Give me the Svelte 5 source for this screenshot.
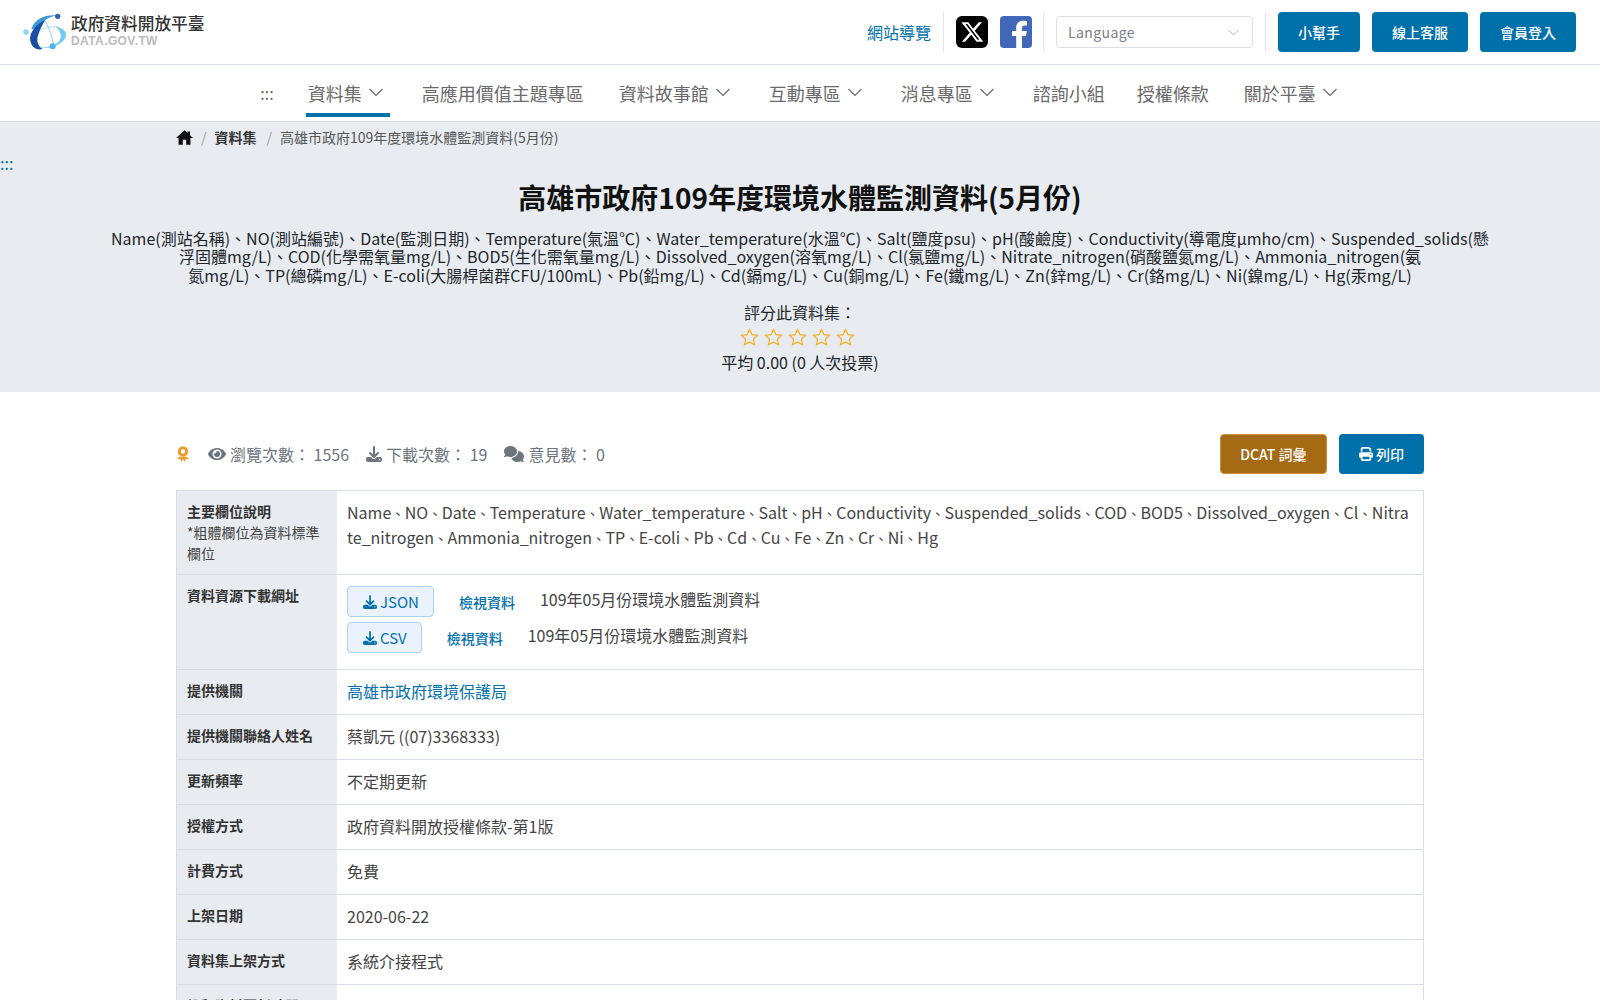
<script lang="ts">
  const navItems = [
    { label: "資料集", caret: true, active: true },
    { label: "高應用價值主題專區", wide: true },
    { label: "資料故事館", caret: true },
    { label: "互動專區", caret: true },
    { label: "消息專區", caret: true },
    { label: "諮詢小組" },
    { label: "授權條款", wide: true },
    { label: "關於平臺", caret: true }
  ];

  const fields = [
    "Name", "NO", "Date", "Temperature", "Water_temperature", "Salt", "pH", "Conductivity",
    "Suspended_solids", "COD", "BOD5", "Dissolved_oxygen", "Cl", "Nitrate_nitrogen",
    "Ammonia_nitrogen", "TP", "E-coli", "Pb", "Cd", "Cu", "Fe", "Zn", "Cr", "Ni", "Hg"
  ];

  const description =
    "Name(測站名稱)、NO(測站編號)、Date(監測日期)、Temperature(氣溫℃)、Water_temperature(水溫℃)、Salt(鹽度psu)、pH(酸鹼度)、Conductivity(導電度µmho/cm)、Suspended_solids(懸浮固體mg/L)、COD(化學需氧量mg/L)、BOD5(生化需氧量mg/L)、Dissolved_oxygen(溶氧mg/L)、Cl(氯鹽mg/L)、Nitrate_nitrogen(硝酸鹽氮mg/L)、Ammonia_nitrogen(氨\n氮mg/L)、TP(總磷mg/L)、E-coli(大腸桿菌群CFU/100mL)、Pb(鉛mg/L)、Cd(鎘mg/L)、Cu(銅mg/L)、Fe(鐵mg/L)、Zn(鋅mg/L)、Cr(鉻mg/L)、Ni(鎳mg/L)、Hg(汞mg/L)";

  const resources = [
    { format: "JSON", name: "109年05月份環境水體監測資料" },
    { format: "CSV", name: "109年05月份環境水體監測資料" }
  ];

  const plainRows = [
    { label: "提供機關聯絡人姓名", value: "蔡凱元 ((07)3368333)" },
    { label: "更新頻率", value: "不定期更新" },
    { label: "授權方式", value: "政府資料開放授權條款-第1版" },
    { label: "計費方式", value: "免費" },
    { label: "上架日期", value: "2020-06-22" },
    { label: "資料集上架方式", value: "系統介接程式" },
    { label: "詮釋資料更新時間", value: "2024-01-15" }
  ];
</script>

{#snippet downloadIcon()}
  <svg class="ico" viewBox="0 0 512 512" fill="currentColor"><path d="M288 32c0-17.700-14.300-32-32-32s-32 14.300-32 32V274.700l-73.400-73.400c-12.500-12.500-32.800-12.500-45.300 0s-12.500 32.800 0 45.300l128 128c12.500 12.500 32.800 12.500 45.300 0l128-128c12.500-12.500 12.500-32.800 0-45.300s-32.800-12.500-45.300 0L288 274.700V32zM64 352c-35.300 0-64 28.700-64 64v32c0 35.300 28.700 64 64 64H448c35.300 0 64-28.700 64-64V416c0-35.300-28.700-64-64-64H346.500l-45.300 45.300c-25 25-65.500 25-90.500 0L165.500 352H64zm368 56a24 24 0 1 1 0 48 24 24 0 1 1 0-48z"/></svg>
{/snippet}

<header class="topbar">
  <a class="logo" href="#top">
    <svg class="logo-mark" viewBox="0 0 150 144">
      <path d="M28 80C60 62 90 56 110 56" fill="none" stroke="#a8def3" stroke-width="3"/>
      <path d="M76 38c11 22 20 46 24 70" fill="none" stroke="#8fd4f0" stroke-width="3"/>
      <path d="M58 118c42 0 68-16 64-38-2-10-8-18-16-25 20 4 34 15 32 28-4 24-44 42-80 35z" fill="#74cdee"/>
      <path d="M34 64C40 38 70 18 110 22 84 28 60 44 48 64z" fill="#3a9ad9"/>
      <path d="M76 36C48 48 24 78 32 102c4 17 20 26 36 21-16-10-20-28-12-46 4-14 12-28 20-41z" fill="#1c4fa3"/>
      <circle cx="18" cy="72" r="8" fill="#8fd4f0"/>
      <circle cx="113" cy="25" r="8" fill="#2f62b5"/>
      <circle cx="98" cy="115" r="9" fill="#4fb2e6"/>
    </svg>
    <span class="logo-text">
      <span class="logo-zh">政府資料開放平臺</span>
      <span class="logo-en">DATA.GOV.TW</span>
    </span>
  </a>

  <div class="top-tools">
    <a class="sitemap" href="#top">網站導覽</a>
    <span class="sep"></span>
    <a class="social x" href="#top" aria-label="X">
      <svg viewBox="0 0 24 24" fill="#fff"><path d="M18.200 3h3.100l-6.800 7.800L22.500 21h-6.300l-4.900-6.400L5.700 21H2.600l7.300-8.300L2.200 3h6.400l4.400 5.900zm-1.100 16.200h1.700L7.700 4.700H5.900z"/></svg>
    </a>
    <a class="social fb" href="#top" aria-label="Facebook">
      <svg viewBox="0 0 32 32" fill="#fff"><path d="M22 32V20h4l.8-5H22v-3c0-1.600.7-2.600 2.700-2.600H27V5c-.9-.1-2.500-.3-4-.3-4 0-6.800 2.500-6.800 7v3.300H12v5h4.200v12z"/></svg>
    </a>
    <span class="sep"></span>
    <div class="lang">
      <span>Language</span>
      <svg class="caret small" viewBox="0 0 16 16"><path d="M2 5l6 6 6-6"/></svg>
    </div>
    <span class="sep"></span>
    <a class="top-btn" href="#top">小幫手</a>
    <a class="top-btn" href="#top">線上客服</a>
    <a class="top-btn" href="#top">會員登入</a>
  </div>
</header>

<nav class="mainnav">
  <span class="nav-dots">:::</span>
  {#each navItems as item}
    <a class="nav-item" class:active={item.active} class:wide={item.wide} href="#top">
      {item.label}
      {#if item.caret}
        <svg class="caret" viewBox="0 0 16 16"><path d="M1.500 5l6.500 6.500L14.500 5"/></svg>
      {/if}
    </a>
  {/each}
</nav>

<section class="banner">
  <ol class="crumbs">
    <li>
      <svg class="home" viewBox="2 3 20 17" fill="#111"><path d="M10 20v-6h4v6h5v-8h3L18.500 8.800V4.500h-3v1.600L12 3 2 12h3v8z"/></svg>
    </li>
    <li class="sl">/</li>
    <li class="crumb-bold">資料集</li>
    <li class="sl">/</li>
    <li class="crumb-cur">高雄市政府109年度環境水體監測資料(5月份)</li>
  </ol>
  <a class="skip" href="#top">:::</a>
  <h1>高雄市政府109年度環境水體監測資料(5月份)</h1>
  <p class="desc">{description}</p>
  <div class="rating">
    <div>評分此資料集：</div>
    <div class="stars">
      {#each [1, 2, 3, 4, 5] as n}
        <svg viewBox="0 0 24 24" data-star={n}><path d="M12 2.800l2.800 5.900 6.400.8-4.700 4.400 1.200 6.400-5.700-3.100-5.700 3.100 1.200-6.400-4.700-4.400 6.400-.8z"/></svg>
      {/each}
    </div>
    <div>平均 0.00 (0 人次投票)</div>
  </div>
</section>

<main class="content">
  <div class="stats">
    <div class="stat-list">
      <svg class="badge" viewBox="0 0 16 20" fill="#eb9d2f"><path d="M8 1a6 6 0 1 1 0 12A6 6 0 0 1 8 1zm0 3.500a2.500 2.500 0 1 0 0 5 2.500 2.500 0 0 0 0-5z"/><path d="M1 15l4 1 1 3 2-3 2 3 1-3 4-1-3-2H4z"/></svg>
      <span class="stat">
        <svg class="ico eye" viewBox="0 0 576 512" fill="currentColor"><path d="M572 241C518 136 411 64 288 64S58 136 4 241a32 32 0 0 0 0 30c54 105 161 177 284 177s230-72 284-177a32 32 0 0 0 0-30zM288 400a144 144 0 1 1 144-144 144 144 0 0 1-144 144zm0-240a95 95 0 0 0-25 4 48 48 0 0 1-67 67 96 96 0 1 0 92-71z"/></svg>
        <span>瀏覽次數： 1556</span>
      </span>
      <span class="stat">{@render downloadIcon()}<span>下載次數： 19</span></span>
      <span class="stat">
        <svg class="ico chat" viewBox="0 0 640 512" fill="currentColor"><path d="M208 352c114.900 0 208-78.800 208-176S322.900 0 208 0S0 78.800 0 176c0 38.600 14.700 74.300 39.600 103.400c-3.500 9.400-8.700 17.700-14.200 24.700c-4.800 6.200-9.700 11-13.300 14.300c-1.800 1.600-3.300 2.900-4.300 3.700c-.5 .4-.9 .7-1.100 .8l-.2 .2C1 327.200-1.400 334.400 .8 340.900S9.100 352 16 352c21.800 0 43.800-5.600 62.100-12.500c9.200-3.500 17.800-7.400 25.300-11.400C134.100 343.300 169.800 352 208 352zM448 176c0 112.300-99.100 196.900-216.500 207C255.800 457.400 336.400 512 432 512c38.200 0 73.900-8.700 104.700-23.900c7.500 4 16 7.900 25.200 11.400c18.300 6.900 40.300 12.500 62.100 12.500c6.900 0 13.100-4.500 15.200-11.100c2.100-6.600-.2-13.800-5.800-17.900l-.2-.2c-.2-.2-.6-.4-1.100-.8c-1-.8-2.500-2-4.300-3.700c-3.600-3.300-8.500-8.100-13.300-14.300c-5.500-7-10.700-15.400-14.200-24.700c24.900-29 39.600-64.700 39.600-103.400c0-92.800-84.900-168.900-192.600-175.500c.4 5.100 .6 10.300 .6 15.500z"/></svg>
        <span>意見數： 0</span>
      </span>
    </div>
    <div class="stat-actions">
      <a class="btn dcat" href="#top">DCAT 詞彙</a>
      <a class="btn print" href="#top">
        <svg class="ico" viewBox="0 0 512 512" fill="currentColor"><path d="M128 0C92.700 0 64 28.700 64 64v96h64V64H354.700L384 93.300V160h64V93.300c0-17-6.700-33.300-18.700-45.300L400 18.700C388 6.700 371.700 0 354.700 0H128zM384 352v96H128V352H384zm64 32h32c17.700 0 32-14.300 32-32V256c0-35.300-28.700-64-64-64H64c-35.300 0-64 28.700-64 64v96c0 17.700 14.300 32 32 32H64v64c0 35.300 28.700 64 64 64H384c35.300 0 64-28.700 64-64V384zM432 248a24 24 0 1 1 0 48 24 24 0 1 1 0-48z"/></svg>
        <span>列印</span>
      </a>
    </div>
  </div>

  <div class="table">
    <div class="row">
      <div class="label">主要欄位說明<small>*粗體欄位為資料標準欄位</small></div>
      <div class="value breakall">{#each fields as f, i}{#if i > 0}<span class="comma">、</span>{/if}{f}{/each}</div>
    </div>
    <div class="row">
      <div class="label">資料資源下載網址</div>
      <div class="value resources">
        {#each resources as res}
          <div class="res">
            <a class="dl" href="#top">{@render downloadIcon()}<span>{res.format}</span></a>
            <a class="view" href="#top">檢視資料</a>
            <span class="res-name">{res.name}</span>
          </div>
        {/each}
      </div>
    </div>
    <div class="row">
      <div class="label">提供機關</div>
      <div class="value"><a class="org" href="#top">高雄市政府環境保護局</a></div>
    </div>
    {#each plainRows as row}
      <div class="row">
        <div class="label">{row.label}</div>
        <div class="value">{row.value}</div>
      </div>
    {/each}
  </div>
</main>

<style>
  :global(body) {
    margin: 0;
    background: #fff;
    color: #212529;
    font-family: "Noto Sans CJK TC", "Noto Sans", sans-serif;
    font-size: 16px;
  }
  :global(html) {
    overflow: hidden;
    height: 1000px;
  }
  a {
    text-decoration: none;
    color: inherit;
  }

  .topbar {
    height: 64px;
    display: flex;
    align-items: center;
    justify-content: space-between;
    padding: 0 24px 0 20px;
    border-bottom: 1px solid #d9dde6;
  }
  .logo {
    display: flex;
    align-items: center;
    gap: 1px;
  }
  .logo-mark {
    width: 50px;
    height: 48px;
  }
  .logo-text {
    display: flex;
    flex-direction: column;
    margin-top: -4px;
  }
  .logo-zh {
    font-size: 16.700px;
    font-weight: 500;
    line-height: 20px;
    color: #333;
  }
  .logo-en {
    font-family: "Liberation Sans", sans-serif;
    font-weight: 700;
    font-size: 12px;
    line-height: 14px;
    color: #bbb;
    letter-spacing: 0.4px;
    margin-top: 1px;
  }
  .top-tools {
    display: flex;
    align-items: center;
  }
  .sitemap {
    color: #0070ab;
    margin-right: 12px;
  }
  .sep {
    width: 1px;
    height: 40px;
    background: #e2e4ea;
  }
  .social {
    width: 32px;
    height: 32px;
    border-radius: 4px;
    display: flex;
    align-items: center;
    justify-content: center;
    margin-left: 12px;
  }
  .social.x {
    background: #000;
    border-radius: 6px;
  }
  .social.x svg {
    width: 26px;
    height: 26px;
  }
  .social.fb {
    background: #4267b8;
    margin-right: 11px;
    overflow: hidden;
  }
  .social.fb svg {
    width: 32px;
    height: 32px;
  }
  .lang {
    width: 197px;
    height: 32px;
    box-sizing: border-box;
    margin: 0 12px;
    padding: 0 12px 0 11px;
    border: 1px solid #dcdfe8;
    border-radius: 4px;
    display: flex;
    align-items: center;
    justify-content: space-between;
    font-size: 14px;
    color: #7a8087;
    letter-spacing: 0.4px;
  }
  .top-btn {
    margin-left: 12px;
    height: 40px;
    padding: 0 20px;
    display: flex;
    align-items: center;
    background: #0070ab;
    color: #fff;
    border-radius: 4px;
    font-size: 14px;
    font-weight: 500;
  }
  .caret {
    width: 16px;
    height: 16px;
    fill: none;
    stroke: #666;
    stroke-width: 1.100;
  }
  .caret.small {
    width: 13px;
    height: 13px;
    stroke: #aaa;
  }

  .mainnav {
    height: 56px;
    display: flex;
    justify-content: center;
    padding-left: 4px;
    border-bottom: 1px solid #d9dde6;
  }
  .nav-dots {
    padding: 0 18px 0 16px;
    line-height: 56px;
    color: #666;
  }
  .nav-item {
    display: flex;
    align-items: center;
    padding: 0 16px;
    font-size: 18px;
    color: #6a6a6a;
    position: relative;
  }
  .nav-item.wide {
    margin-right: 3px;
  }
  .nav-item .caret {
    margin: 0 6px 2px 6px;
  }
  .nav-item.active::after {
    content: "";
    position: absolute;
    left: 14px;
    right: 16px;
    bottom: 4px;
    height: 4px;
    background: #0070ab;
  }

  .banner {
    background: #e8ecf1;
    height: 270px;
    box-sizing: border-box;
    text-align: center;
    overflow: hidden;
  }
  .crumbs {
    list-style: none;
    margin: 0;
    padding: 0 176px;
    height: 30px;
    display: flex;
    align-items: center;
    gap: 8px;
    font-size: 14px;
    color: #555;
  }
  .home {
    display: block;
    width: 17px;
    height: 15px;
  }
  .sl {
    color: #9aa0a8;
  }
  .crumb-bold {
    font-weight: 700;
    color: #333;
    margin-right: 2px;
  }
  .skip {
    display: block;
    text-align: left;
    color: #0070ab;
    line-height: 24px;
    margin-top: -1px;
    font-size: 16px;
  }
  h1 {
    margin: 1px 0 11px;
    font-size: 28px;
    line-height: 42px;
    font-weight: 700;
    color: #111;
  }
  .desc {
    width: 1385px;
    margin: 0 auto 16px;
    line-height: 18.400px;
    color: #212529;
    white-space: pre-line;
  }
  .rating {
    line-height: 24px;
    color: #212529;
  }
  .stars {
    display: flex;
    justify-content: center;
    gap: 3px;
    height: 26px;
    align-items: center;
    margin-right: 6px;
  }
  .stars svg {
    width: 21px;
    height: 21px;
    fill: none;
    stroke: #f2b632;
    stroke-width: 1.500;
  }

  .content {
    padding: 0 176px;
  }
  .stats {
    padding: 42px 0 16px;
    display: flex;
    align-items: center;
    justify-content: space-between;
  }
  .stat-list {
    display: flex;
    align-items: center;
    gap: 17px;
    color: #6c757d;
  }
  .badge {
    width: 14px;
    height: 18px;
    margin-right: 1px;
  }
  .stat {
    display: flex;
    align-items: center;
    gap: 4px;
    white-space: pre;
  }
  .ico {
    width: 16px;
    height: 16px;
    flex: none;
  }
  .ico.eye {
    width: 18px;
  }
  .ico.chat {
    width: 20px;
  }
  .stat-actions {
    display: flex;
    gap: 12px;
  }
  .btn {
    height: 40px;
    box-sizing: border-box;
    display: flex;
    align-items: center;
    gap: 3px;
    padding: 0 20px;
    border-radius: 4px;
    font-size: 14px;
    font-weight: 500;
    color: #fff;
  }
  .dcat {
    background: #a56a14;
    border: 1px solid #d08f32;
    padding: 0 19.500px;
  }
  .print {
    background: #0070ab;
  }
  .print .ico {
    width: 14px;
    height: 14px;
  }

  .table {
    border: 1px solid #d9dde6;
    border-bottom: 0;
  }
  .row {
    display: flex;
    border-bottom: 1px solid #d9dde6;
  }
  .label {
    width: 160px;
    flex: none;
    box-sizing: border-box;
    padding: 9.500px 10px 10.500px;
    background: #e8ecf1;
    font-size: 14px;
    font-weight: 700;
    line-height: 21px;
    color: #333;
  }
  .label small {
    display: block;
    font-size: 14px;
    font-weight: 400;
    color: #444;
  }
  .value {
    flex: 1;
    min-width: 0;
    padding: 9px 10px 11px;
    line-height: 24px;
    color: #444;
  }
  .breakall {
    word-break: break-all;
  }
  .comma {
    font-size: 13.500px;
  }
  .resources {
    display: flex;
    flex-direction: column;
    gap: 4px;
    padding: 11px 10px 15px;
  }
  .res {
    display: flex;
    align-items: flex-start;
  }
  .res-name {
    margin-left: 25px;
    line-height: 26px;
  }
  .dl {
    height: 31px;
    box-sizing: border-box;
    display: flex;
    align-items: center;
    gap: 3px;
    padding: 0 14px 0 15px;
    background: #eaf3fd;
    border: 1px solid #a9d1f0;
    border-radius: 4px;
    color: #0070ab;
    font-weight: 400;
    font-size: 15px;
  }
  .dl .ico {
    width: 14px;
    height: 14px;
  }
  .view {
    margin-left: 25px;
    color: #0070ab;
    font-size: 14px;
    font-weight: 500;
    line-height: 32px;
  }
  .org {
    color: #0070ab;
  }
</style>
